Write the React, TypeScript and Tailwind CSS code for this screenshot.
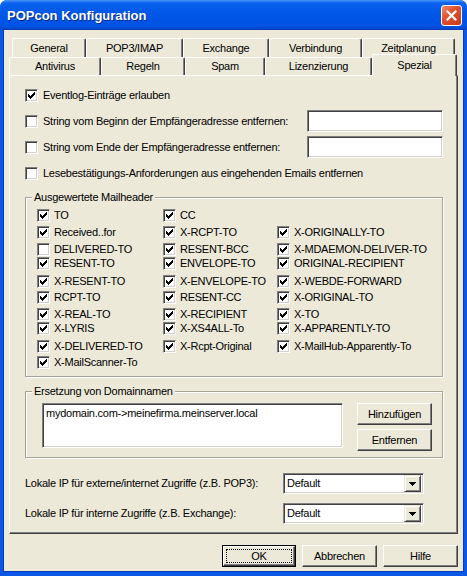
import React from 'react';

type Header = { label: string; checked: boolean } | null;

// one row per line in the "Ausgewertete Mailheader" box; row heights follow the original dialog
const headerRows: { h: string; cols: Header[] }[] = [
  { h: 'h-[17px]', cols: [{ label: 'TO', checked: true }, { label: 'CC', checked: true }, null] },
  { h: 'h-[17px]', cols: [{ label: 'Received..for', checked: true }, { label: 'X-RCPT-TO', checked: true }, { label: 'X-ORIGINALLY-TO', checked: true }] },
  { h: 'h-[14px]', cols: [{ label: 'DELIVERED-TO', checked: false }, { label: 'RESENT-BCC', checked: true }, { label: 'X-MDAEMON-DELIVER-TO', checked: true }] },
  { h: 'h-[18px]', cols: [{ label: 'RESENT-TO', checked: true }, { label: 'ENVELOPE-TO', checked: true }, { label: 'ORIGINAL-RECIPIENT', checked: true }] },
  { h: 'h-[16px]', cols: [{ label: 'X-RESENT-TO', checked: true }, { label: 'X-ENVELOPE-TO', checked: true }, { label: 'X-WEBDE-FORWARD', checked: true }] },
  { h: 'h-[17px]', cols: [{ label: 'RCPT-TO', checked: true }, { label: 'RESENT-CC', checked: true }, { label: 'X-ORIGINAL-TO', checked: true }] },
  { h: 'h-[14px]', cols: [{ label: 'X-REAL-TO', checked: true }, { label: 'X-RECIPIENT', checked: true }, { label: 'X-TO', checked: true }] },
  { h: 'h-[18px]', cols: [{ label: 'X-LYRIS', checked: true }, { label: 'X-XS4ALL-To', checked: true }, { label: 'X-APPARENTLY-TO', checked: true }] },
  { h: 'h-[16px]', cols: [{ label: 'X-DELIVERED-TO', checked: true }, { label: 'X-Rcpt-Original', checked: true }, { label: 'X-MailHub-Apparently-To', checked: true }] },
  { h: 'h-[16px]', cols: [{ label: 'X-MailScanner-To', checked: true }, null, null] },
];

const colWidths = ['w-[126px]', 'w-[114px]', 'w-[150px]'];

const topTabs = [
  { label: 'General', w: 'w-[74px]' },
  { label: 'POP3/IMAP', w: 'w-[97px]' },
  { label: 'Exchange', w: 'w-[86px]' },
  { label: 'Verbindung', w: 'w-[93px]' },
  { label: 'Zeitplanung', w: 'w-[93px]' },
];

const bottomTabs = [
  { label: 'Antivirus', w: 'w-[92px]' },
  { label: 'Regeln', w: 'w-[84px]' },
  { label: 'Spam', w: 'w-[80px]' },
  { label: 'Lizenzierung', w: 'w-[107px]' },
];

const Check = ({ checked }: { checked: boolean }) => (
  <span className="w-[13px] h-[13px] shrink-0 bg-white border border-t-[#808080] border-l-[#808080] border-r-white border-b-white shadow-[inset_1px_1px_0_#404040,inset_-1px_-1px_0_#d4d0c8] flex items-center justify-center">
    {checked && (
      <svg width="7" height="7" viewBox="0 0 7 7" shapeRendering="crispEdges">
        <path d="M0 2h1v3H0zM1 3h1v3H1zM2 4h1v3H2zM3 3h1v3H3zM4 2h1v3H4zM5 1h1v3H5zM6 0h1v3H6z" fill="#000" />
      </svg>
    )}
  </span>
);

const Button = ({ label, w = 'w-[75px]', focused = false }: { label: string; w?: string; focused?: boolean }) =>
  focused ? (
    <div className={`${w} h-[22px] border border-black bg-[#ece9d8]`}>
      <div className="h-full border border-t-white border-l-white border-r-[#404040] border-b-[#404040] shadow-[inset_-1px_-1px_0_#808080] p-[2px]">
        <div className="h-full border border-dotted border-black flex items-center justify-center">{label}</div>
      </div>
    </div>
  ) : (
    <div className={`${w} h-[22px] border border-t-white border-l-white border-r-[#404040] border-b-[#404040] shadow-[inset_-1px_-1px_0_#808080] bg-[#ece9d8] flex items-center justify-center`}>
      {label}
    </div>
  );

const Sunken = ({ className, children }: { className: string; children?: React.ReactNode }) => (
  <div className={`${className} bg-white border border-t-[#808080] border-l-[#808080] border-r-white border-b-white shadow-[inset_1px_1px_0_#404040,inset_-1px_-1px_0_#d4d0c8]`}>
    {children}
  </div>
);

const Combo = () => (
  <Sunken className="w-[141px] h-[21px] flex items-center pl-[3px] pr-[2px]">
    <span className="flex-1">Default</span>
    <div className="w-[17px] h-[17px] bg-[#ece9d8] border border-t-[#ece9d8] border-l-[#ece9d8] border-r-[#404040] border-b-[#404040] shadow-[inset_1px_1px_0_#fff,inset_-1px_-1px_0_#808080] flex items-center justify-center">
      <svg width="7" height="4" viewBox="0 0 7 4" shapeRendering="crispEdges">
        <path d="M0 0h7v1H0zM1 1h5v1H1zM2 2h3v1H2zM3 3h1v1H3z" fill="#000" />
      </svg>
    </div>
  </Sunken>
);

const GroupBox = ({ title, className, children }: { title: string; className: string; children: React.ReactNode }) => (
  <div className={`relative ${className} border border-[#a5a597] shadow-[1px_1px_0_#fff,inset_1px_1px_0_#fff]`}>
    <span className="absolute -top-[8px] left-[6px] px-[2px] bg-[#ece9d8] leading-[14px]">{title}</span>
    {children}
  </div>
);

export default function App() {
  return (
    <div className="w-[467px] h-[576px] bg-white font-['Liberation_Sans',Arial,sans-serif] text-[11px] tracking-[-0.25px] text-black leading-none select-none">
      <div className="w-full h-full flex flex-col rounded-t-[7px] bg-[#0a58e4] overflow-hidden">
        {/* title bar */}
        <div className="h-[30px] shrink-0 flex items-center justify-between pl-[7px] pr-[5px] bg-[linear-gradient(to_bottom,#4a98fb_0%,#0a62ee_10%,#0057e8_45%,#0053e4_85%,#0245cc_100%)]">
          <span className="text-white font-bold text-[13px] tracking-normal [text-shadow:1px_1px_0_#0a2a8a]">POPcon Konfiguration</span>
          <div className="w-[21px] h-[21px] rounded-[3px] border border-white bg-[linear-gradient(135deg,#f08a6a_0%,#e0522e_40%,#c8391a_100%)] flex items-center justify-center">
            <svg width="11" height="11" viewBox="0 0 11 11">
              <path d="M1.5 1.5l8 8M9.5 1.5l-8 8" stroke="#fff" strokeWidth="2.2" strokeLinecap="square" />
            </svg>
          </div>
        </div>

        {/* dialog body */}
        <div className="flex-1 mx-[4px] mb-[5px] bg-[#ece9d8] flex flex-col px-[5px] pt-[8px] shadow-[0_0_0_1px_#0b3cb8]">
          {/* tabs */}
          <div className="flex pl-[3px] h-[19px]">
            {topTabs.map((t) => (
              <div key={t.label} className={`${t.w} h-[19px] shrink-0 border-t border-l border-white border-r border-r-[#404040] shadow-[inset_-1px_0_0_#808080] rounded-t-[2px] flex items-center justify-center`}>
                {t.label}
              </div>
            ))}
          </div>
          <div className="flex items-end h-[21px] -mt-[3px]">
            {bottomTabs.map((t) => (
              <div key={t.label} className={`${t.w} h-[18px] shrink-0 bg-[#ece9d8] border-t border-l border-white border-r border-r-[#404040] shadow-[inset_-1px_0_0_#808080] rounded-t-[2px] flex items-center justify-center`}>
                {t.label}
              </div>
            ))}
            <div className="w-[85px] h-[22px] shrink-0 relative top-[1px] z-10 bg-[#ece9d8] border-t border-l border-white border-r border-r-[#404040] shadow-[inset_-1px_0_0_#808080] rounded-t-[2px] flex justify-center pt-[5px]">
              Spezial
            </div>
          </div>

          {/* tab page */}
          <div className="w-[449px] h-[459px] shrink-0 border border-t-white border-l-white border-r-[#404040] border-b-[#404040] shadow-[inset_-1px_-1px_0_#808080] pl-[15px] pt-[6px] flex flex-col">
            <div className="h-[26px] flex items-center gap-[5px]">
              <Check checked />
              <span>Eventlog-Einträge erlauben</span>
            </div>
            <div className="h-[26px] flex items-center">
              <div className="w-[282px] flex items-center gap-[5px]">
                <Check checked={false} />
                <span>String vom Beginn der Empfängeradresse entfernen:</span>
              </div>
              <Sunken className="w-[136px] h-[22px]" />
            </div>
            <div className="h-[26px] flex items-center">
              <div className="w-[282px] flex items-center gap-[5px]">
                <Check checked={false} />
                <span>String vom Ende der Empfängeradresse entfernen:</span>
              </div>
              <Sunken className="w-[136px] h-[22px]" />
            </div>
            <div className="h-[26px] flex items-center gap-[5px]">
              <Check checked={false} />
              <span>Lesebestätigungs-Anforderungen aus eingehenden Emails entfernen</span>
            </div>

            <GroupBox title="Ausgewertete Mailheader" className="mt-[11px] w-[418px] h-[180px] pt-[11px] pl-[11px]">
              {headerRows.map((row, i) => (
                <div key={i} className={`${row.h} flex items-start`}>
                  {row.cols.map((c, j) => (
                    <div key={j} className={`${colWidths[j]} flex items-center gap-[4px]`}>
                      {c && (
                        <>
                          <Check checked={c.checked} />
                          <span className="whitespace-nowrap">{c.label}</span>
                        </>
                      )}
                    </div>
                  ))}
                </div>
              ))}
            </GroupBox>

            <GroupBox title="Ersetzung von Domainnamen" className="mt-[14px] w-[418px] h-[67px] pt-[11px] pl-[16px] flex items-start">
              <Sunken className="w-[301px] h-[45px] px-[3px] pt-[4px]">
                <span>mydomain.com-&gt;meinefirma.meinserver.local</span>
              </Sunken>
              <div className="ml-[14px] flex flex-col gap-[4px]">
                <Button label="Hinzufügen" />
                <Button label="Entfernen" />
              </div>
            </GroupBox>

            <div className="mt-[15px] h-[21px] flex items-center">
              <span className="w-[258px]">Lokale IP für externe/internet Zugriffe (z.B. POP3):</span>
              <Combo />
            </div>
            <div className="mt-[9px] h-[21px] flex items-center">
              <span className="w-[258px]">Lokale IP für interne Zugriffe (z.B. Exchange):</span>
              <Combo />
            </div>
          </div>

          {/* dialog buttons */}
          <div className="mt-[11px] flex justify-end gap-[6px]">
            <Button label="OK" w="w-[74px]" focused />
            <Button label="Abbrechen" />
            <Button label="Hilfe" />
          </div>
        </div>
      </div>
    </div>
  );
}
